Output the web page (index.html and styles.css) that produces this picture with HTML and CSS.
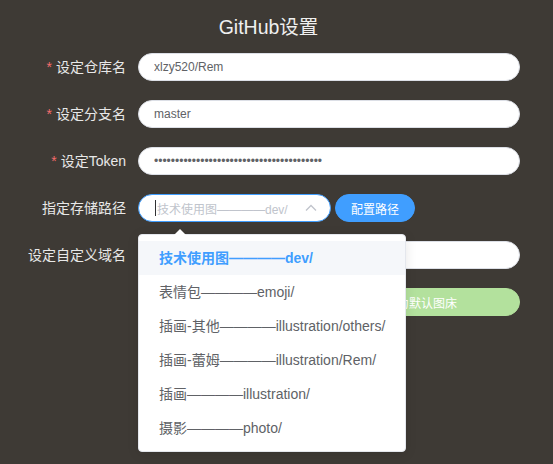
FILE: index.html
```html
<!DOCTYPE html>
<html lang="zh-CN">
<head>
<meta charset="utf-8">
<title>GitHub设置</title>
<link rel="stylesheet" href="styles.css">
</head>
<body>
<div class="page">
  <h2 class="title">GitHub设置</h2>
  <form class="form">
    <div class="row">
      <label class="label required">设定仓库名</label>
      <div class="content"><input class="input" type="text" value="xlzy520/Rem"></div>
    </div>
    <div class="row">
      <label class="label required">设定分支名</label>
      <div class="content"><input class="input" type="text" value="master"></div>
    </div>
    <div class="row">
      <label class="label required">设定Token</label>
      <div class="content"><input class="input" type="password" value="0123456789012345678901234567890123456789"></div>
    </div>
    <div class="row">
      <label class="label">指定存储路径</label>
      <div class="content content-inline">
        <div class="select">
          <div class="select-box">
            <span class="caret-cursor"></span>
            <span class="placeholder">技术使用图————dev/</span>
            <svg class="chevron" width="12" height="8" viewBox="0 0 12 8"><polyline points="1,6.5 6,1.5 11,6.5" fill="none" stroke="#c0c4cc" stroke-width="1.3"/></svg>
          </div>
          <div class="dropdown">
            <span class="arrow"></span>
            <ul class="options">
              <li class="option selected">技术使用图————dev/</li>
              <li class="option">表情包————emoji/</li>
              <li class="option">插画-其他————illustration/others/</li>
              <li class="option">插画-蕾姆————illustration/Rem/</li>
              <li class="option">插画————illustration/</li>
              <li class="option">摄影————photo/</li>
            </ul>
          </div>
        </div>
        <button type="button" class="btn btn-primary">配置路径</button>
      </div>
    </div>
    <div class="row">
      <label class="label">设定自定义域名</label>
      <div class="content"><input class="input" type="text" value=""></div>
    </div>
    <div class="row">
      <span class="label"></span>
      <div class="content content-end">
        <button type="button" class="btn btn-success-disabled">设为默认图床</button>
      </div>
    </div>
  </form>
</div>
</body>
</html>
```

FILE: styles.css
```css
* { box-sizing: border-box; }
html, body {
  margin: 0;
  padding: 0;
  background: #3e3a35;
  font-family: "Liberation Sans", "Noto Sans CJK SC", sans-serif;
}
.page {
  width: 553px;
  height: 464px;
  overflow: hidden;
  padding-top: 13px;
}
.title {
  margin: 0 16px 12px 0;
  text-align: center;
  font-size: 19.5px;
  line-height: 28px;
  font-weight: normal;
  color: #efefef;
}
.form {
  display: flex;
  flex-direction: column;
  gap: 19px;
  padding-right: 33px;
}
.row {
  display: flex;
  align-items: center;
  height: 28px;
}
.label {
  flex: 0 0 138px;
  padding-right: 12px;
  text-align: right;
  font-size: 14px;
  line-height: 28px;
  color: #e8e8e8;
}
.label.required::before {
  content: "*";
  color: #f56c6c;
  margin-right: 4px;
}
.content {
  flex: 1;
  display: flex;
  align-items: center;
  position: relative;
}
.content-inline { gap: 4px; }
.content-end { justify-content: flex-end; }
.input {
  width: 100%;
  height: 28px;
  border: 1px solid #dcdfe6;
  border-radius: 20px;
  background: #fff;
  padding: 0 15px;
  font-family: inherit;
  font-size: 12px;
  color: #606266;
  outline: none;
}
.select {
  position: relative;
  width: 193px;
}
.select-box {
  height: 28px;
  border: 1px solid #409eff;
  border-radius: 20px;
  background: #fff;
  display: flex;
  align-items: center;
  padding: 0 10px 0 16px;
  font-size: 12px;
}
.caret-cursor {
  width: 1px;
  height: 16px;
  background: #303133;
  margin-right: 1px;
}
.placeholder {
  color: #c0c4cc;
  flex: 1;
  white-space: nowrap;
}
.chevron { margin-right: 3px; }
.dropdown {
  position: absolute;
  left: 0;
  top: 40px;
  width: 268px;
  background: #fff;
  border: 1px solid #e4e7ed;
  border-radius: 4px;
  box-shadow: 0 2px 12px 0 rgba(0, 0, 0, 0.1);
  z-index: 10;
}
.arrow {
  position: absolute;
  top: -6px;
  left: 35px;
  width: 0;
  height: 0;
  border-left: 6px solid transparent;
  border-right: 6px solid transparent;
  border-bottom: 6px solid #fff;
}
.options {
  list-style: none;
  margin: 0;
  padding: 6px 0;
}
.option {
  height: 34px;
  line-height: 34px;
  padding: 0 20px;
  font-size: 14px;
  color: #606266;
  white-space: nowrap;
}
.option.selected {
  background: #f5f7fa;
  color: #409eff;
  font-weight: bold;
}
.btn {
  height: 28px;
  border-radius: 20px;
  border: 1px solid transparent;
  font-family: inherit;
  font-size: 12px;
  color: #fff;
  padding: 0 15px;
  white-space: nowrap;
}
.btn-primary {
  width: 80px;
  background: #409eff;
  border-color: #409eff;
}
.btn-success-disabled {
  width: 190px;
  padding: 0 18px 0 10px;
  background: #b3e19d;
  border-color: #b3e19d;
}
```
